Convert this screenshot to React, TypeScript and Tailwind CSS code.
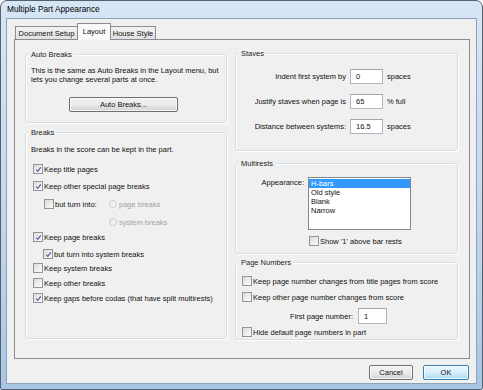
import React from 'react'

function Box({checked}: {checked?: boolean}) {
    return (
        <span className="flex h-[10px] w-[10px] shrink-0 items-center justify-center border border-[#959595] bg-linear-to-br from-[#dcdcdc] to-[#fbfbfb]">
            {checked && (
                <svg viewBox="0 0 8 8" className="h-[7px] w-[7px]">
                    <path d="M1.4 4.2 L3.2 6.1 L6.6 1.5" stroke="#45609c" strokeWidth="1.3" fill="none"/>
                </svg>
            )}
        </span>
    )
}

function Check({label, checked, className = ''}: {label: string, checked?: boolean, className?: string}) {
    return (
        <div className={`flex h-[14px] items-center gap-[1px] whitespace-nowrap ${className}`}>
            <Box checked={checked}/>
            <span>{label}</span>
        </div>
    )
}

function Radio({label}: {label: string}) {
    return (
        <div className="flex items-center whitespace-nowrap text-[#a3a3a3]">
            <span className="h-[8px] w-[8px] shrink-0 rounded-full border border-[#cfcfcf] bg-linear-to-br from-[#e6e6e6] to-[#fbfbfb]"/>
            <span className="ml-[2px]">{label}</span>
        </div>
    )
}

function Group({label, className = '', children}: {label: string, className?: string, children?: React.ReactNode}) {
    return (
        <div className={`relative rounded-[3px] border border-[#d5dfe5] shadow-[inset_1px_1px_0_#fff,1px_1px_0_#fff] ${className}`}>
            <span className="absolute -top-[5px] left-[3px] bg-[#f0f0f0] px-[2px] leading-[9px] text-[#1e1e1e]">{label}</span>
            {children}
        </div>
    )
}

function Field({value, className = ''}: {value: string, className?: string}) {
    return (
        <div className={`flex h-[15px] items-center border border-[#b3b6be] border-t-[#a3a6ad] bg-white pl-[5px] ${className}`}>
            {value}
        </div>
    )
}

function WinButton({children, primary, className = ''}: {children: React.ReactNode, primary?: boolean, className?: string}) {
    return (
        <div
            className={`flex h-[15px] items-center justify-center rounded-[2px] border shadow-[inset_0_0_0_1px_rgba(255,255,255,0.7)] ${primary
                ? 'border-[#3c7fb1] bg-linear-to-b from-[#eaf6fd] via-[#d9f0fc] to-[#a7d9f5]'
                : 'border-[#707070] bg-linear-to-b from-[#f3f3f3] via-[#ebebeb] to-[#d2d2d2]'} ${className}`}>
            {children}
        </div>
    )
}

export default function App() {
    return (
        <div className="h-[390px] w-[483px] bg-white font-['Liberation_Sans',Arial,sans-serif] text-[7.5px] leading-[9px] text-[#111]">
            <div className="flex h-full w-full flex-col rounded-t-[7px] rounded-b-[2px] border border-[#56616e] bg-linear-to-b from-[#d7e6f6] via-[#c6d9ee] to-[#a9c6e6]">
                <div className="flex h-[17px] items-center pl-[6px] text-[8.3px] text-black">Multiple Part Appearance</div>

                <div className="mx-[5px] mb-[5px] flex flex-1 flex-col border border-[#8fa3b8] bg-[#f0f0f0] pt-[4px] pl-[7px] pr-[6px]">
                    {/* tabs */}
                    <div className="flex h-[16px] items-end pl-[1px]">
                        <div className="flex h-[13px] w-[63px] items-center justify-center border border-b-0 border-[#898c95] bg-linear-to-b from-[#f3f3f3] to-[#e1e1e1]">
                            Document Setup
                        </div>
                        <div className="relative z-10 -mb-[1px] -ml-[1px] flex h-[17px] w-[34px] items-center justify-center border border-b-0 border-[#898c95] bg-[#f9f9f9] pb-[2px]">
                            Layout
                        </div>
                        <div className="-ml-[1px] flex h-[13px] w-[46px] items-center justify-center border border-b-0 border-[#898c95] bg-linear-to-b from-[#f3f3f3] to-[#e1e1e1]">
                            House Style
                        </div>
                    </div>

                    {/* tab page */}
                    <div className="flex h-[320px] items-start gap-[8px] border border-[#898c95] bg-[#f0f0f0] pl-[10px] pr-[11px]">
                        <div className="mt-[14px] flex w-[202px] flex-col">
                            <Group label="Auto Breaks" className="h-[69px]">
                                <div className="flex flex-col pt-[11px] pl-[5px]">
                                    <p className="whitespace-nowrap">
                                        This is the same as Auto Breaks in the Layout menu, but<br/>
                                        lets you change several parts at once.
                                    </p>
                                    <WinButton className="mt-[13px] ml-[38px] h-[14px] w-[109px]">Auto Breaks...</WinButton>
                                </div>
                            </Group>

                            <Group label="Breaks" className="mt-[9px] h-[207px]">
                                <div className="flex flex-col pt-[9px] pl-[5px]">
                                    <div className="flex h-[14px] items-center whitespace-nowrap">Breaks in the score can be kept in the part.</div>
                                    <Check className="mt-[6px] ml-[2px]" checked label="Keep title pages"/>
                                    <Check className="mt-[3px] ml-[2px]" checked label="Keep other special page breaks"/>
                                    <div className="mt-[4px] ml-[13px] flex h-[14px] items-center">
                                        <div className="flex w-[65px] items-center gap-[1px] whitespace-nowrap">
                                            <Box/>
                                            <span>but turn into:</span>
                                        </div>
                                        <Radio label="page breaks"/>
                                    </div>
                                    <div className="mt-[4px] ml-[78px] flex h-[14px] items-center">
                                        <Radio label="system breaks"/>
                                    </div>
                                    <Check className="mt-[1px] ml-[2px]" checked label="Keep page breaks"/>
                                    <Check className="mt-[3px] ml-[12px]" checked label="but turn into system breaks"/>
                                    <Check className="ml-[2px]" label="Keep system breaks"/>
                                    <Check className="mt-[1px] ml-[2px]" label="Keep other breaks"/>
                                    <Check className="mt-[1px] ml-[2px]" checked label="Keep gaps before codas (that have split multirests)"/>
                                </div>
                            </Group>
                        </div>

                        <div className="mt-[13px] flex w-[223px] flex-col">
                            <Group label="Staves" className="h-[98px]">
                                <div className="flex flex-col gap-[10px] pt-[15px]">
                                    {[
                                        ['Indent first system by', '0', 'spaces'],
                                        ['Justify staves when page is', '65', '% full'],
                                        ['Distance between systems:', '16.5', 'spaces'],
                                    ].map(([label, value, unit]) => (
                                        <div key={label} className="flex h-[15px] items-center whitespace-nowrap">
                                            <span className="w-[110px] text-right">{label}</span>
                                            <Field value={value} className="ml-[4px] w-[33px]"/>
                                            <span className="ml-[4px]">{unit}</span>
                                        </div>
                                    ))}
                                </div>
                            </Group>

                            <Group label="Multirests" className="mt-[12px] h-[91px]">
                                <div className="flex flex-col pt-[13px]">
                                    <div className="flex items-start">
                                        <span className="w-[68px] pt-[1px] text-right">Appearance:</span>
                                        <div className="ml-[4px] flex h-[53px] w-[103px] flex-col border border-[#828790] bg-white pt-[1px]">
                                            <div className="flex h-[9px] items-center bg-[#3399ff] pl-[2px] text-white">H-bars</div>
                                            <div className="flex h-[9px] items-center pl-[2px]">Old style</div>
                                            <div className="flex h-[9px] items-center pl-[2px]">Blank</div>
                                            <div className="flex h-[9px] items-center pl-[2px]">Narrow</div>
                                        </div>
                                    </div>
                                    <Check className="mt-[4px] ml-[73px]" label="Show '1' above bar rests"/>
                                </div>
                            </Group>

                            <Group label="Page Numbers" className="mt-[8px] h-[78px]">
                                <div className="flex flex-col pt-[11px] pl-[6px]">
                                    <Check label="Keep page number changes from title pages from score"/>
                                    <Check className="mt-[2px]" label="Keep other page number changes from score"/>
                                    <div className="mt-[4px] flex h-[16px] items-center whitespace-nowrap">
                                        <span className="w-[111px] text-right">First page number:</span>
                                        <Field value="1" className="ml-[5px] h-[16px] w-[29px]"/>
                                    </div>
                                    <Check className="mt-[1px]" label="Hide default page numbers in part"/>
                                </div>
                            </Group>
                        </div>
                    </div>

                    {/* dialog buttons */}
                    <div className="mt-[6px] flex justify-end gap-[10px] pr-[1px]">
                        <WinButton className="w-[44px]">Cancel</WinButton>
                        <WinButton primary className="w-[46px]">OK</WinButton>
                    </div>
                </div>
            </div>
        </div>
    )
}
